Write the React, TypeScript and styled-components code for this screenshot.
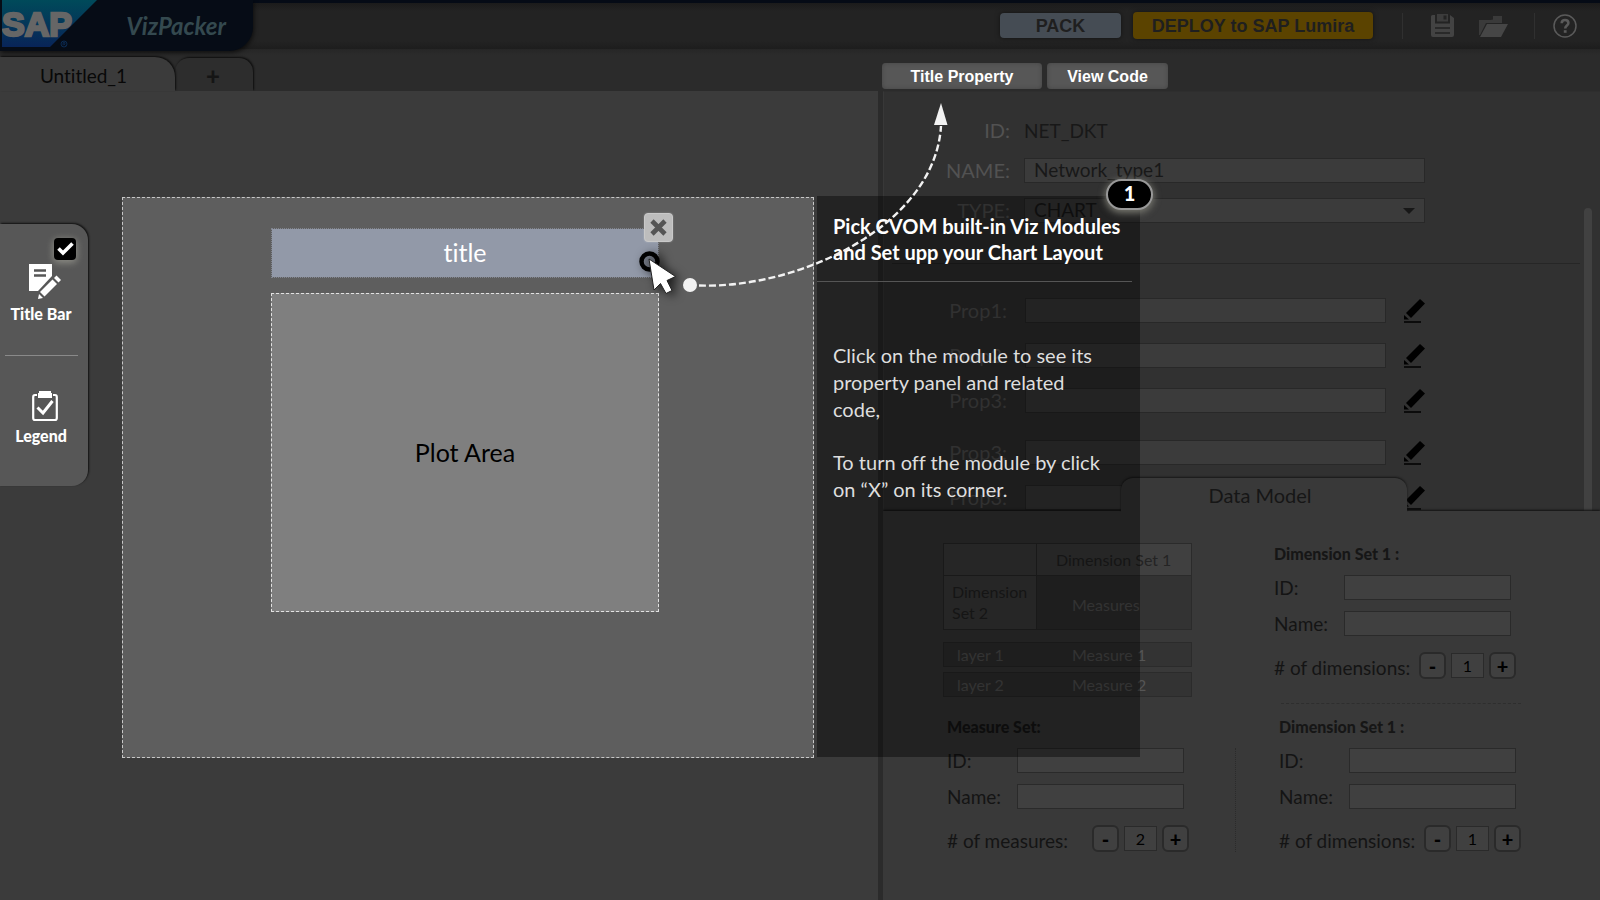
import React from "react";
import styled, { createGlobalStyle } from "styled-components";

const GlobalStyle = createGlobalStyle`
  *, *::before, *::after { box-sizing: border-box; }
  body {
    margin: 0;
    background: #3b3b3b;
    color: #141414;
    font-family: Lato, "Open Sans", sans-serif;
    font-size: 20px;
    font-variant-ligatures: none;
  }
  button, input, select { font: inherit; color: inherit; margin: 0; }
  h1, h2, h3, p, ul { margin: 0; padding: 0; }
`;

const INSPECTOR_WIDTH = "722px";

const Page = styled.div`
  display: flex;
  flex-direction: column;
  min-height: 100vh;
  overflow: hidden;
`;

/* ---------- header ---------- */

const Header = styled.header`
  display: flex;
  justify-content: space-between;
  height: 49px;
  border-top: 3px solid #050b16;
  background: linear-gradient(#1b1b1b, #232323 8px, #232323 38px, #1d1d1d);
`;

const Brand = styled.div`
  position: relative;
  z-index: 2;
  display: flex;
  align-items: center;
  justify-content: space-between;
  width: 253px;
  height: 51px;
  margin-top: -3px;
  padding-right: 27px;
  border-bottom-right-radius: 24px;
  background: #060c16;
  box-shadow: 1px 2px 4px rgba(0, 0, 0, 0.6);
`;

const LogoSvg = styled.svg`
  display: block;
  align-self: flex-start;
  margin-left: 2px;
`;

const ProductName = styled.h1`
  color: #34494f;
  font-size: 24px;
  font-style: italic;
  font-weight: 700;
  line-height: 26px;
`;

const HeaderActions = styled.div`
  display: flex;
  align-items: center;
  padding: 0 23px 1px 0;
`;

const ActionButton = styled.button<{ $tone: "pack" | "deploy" }>`
  width: ${(p) => (p.$tone === "pack" ? "121px" : "240px")};
  height: ${(p) => (p.$tone === "pack" ? "25px" : "27px")};
  margin-right: ${(p) => (p.$tone === "pack" ? "12px" : "29px")};
  padding: 0;
  border: 0;
  border-radius: 4px;
  background: ${(p) => (p.$tone === "pack" ? "#454c54" : "#5b4300")};
  box-shadow: 0 0 5px rgba(0, 0, 0, 0.5);
  color: #1f1f1f;
  font-family: "Liberation Sans", Arial, sans-serif;
  font-size: 18px;
  font-weight: 700;
  line-height: 24px;
`;

const IconButton = styled.button<{ $gap?: number }>`
  display: flex;
  padding: 0;
  border: 0;
  background: none;
  margin-left: ${(p) => p.$gap ?? 0}px;
`;

const HeaderRule = styled.span<{ $gap?: number }>`
  width: 1px;
  height: 26px;
  margin-left: ${(p) => p.$gap ?? 0}px;
  background: #303030;
`;

/* ---------- tab strip ---------- */

const TabStrip = styled.div`
  display: flex;
  height: 42px;
  background: linear-gradient(#262626, #2b2b2b 6px);
`;

const FileTabs = styled.nav`
  display: flex;
  flex: 1;
  align-items: flex-end;
  min-width: 0;
`;

const FileTab = styled.button`
  position: relative;
  width: 175px;
  height: 34px;
  padding: 4px 8px 0 0;
  border: 0;
  border-top-right-radius: 20px;
  background: #3b3b3b;
  box-shadow: 1px -1px 2px rgba(0, 0, 0, 0.7);
  color: #080808;
  font-size: 19px;
  line-height: 24px;
`;

const AddTab = styled.button`
  width: 78px;
  height: 33px;
  padding: 3px 2px 0 0;
  border: 0;
  border-radius: 14px 14px 0 0;
  background: #2d2d2d;
  box-shadow: 1px -1px 2px rgba(0, 0, 0, 0.7);
  color: #151515;
  font-size: 24px;
  font-weight: 900;
  line-height: 24px;
`;

const InspectorTabs = styled.div`
  display: flex;
  flex: 0 0 ${INSPECTOR_WIDTH};
  align-items: flex-end;
  gap: 5px;
  padding: 0 0 2px 4px;
`;

const InspectorTab = styled.button<{ $wide?: boolean }>`
  width: ${(p) => (p.$wide ? "160px" : "121px")};
  height: 26px;
  padding: 1px 0 0;
  border: 0;
  border-radius: 4px;
  background: #575757;
  box-shadow: inset 0 0 4px #444;
  color: #fff;
  font-family: "Liberation Sans", Arial, sans-serif;
  font-size: 16px;
  font-weight: 700;
  line-height: 25px;
`;

/* ---------- workspace ---------- */

const Workspace = styled.main`
  display: flex;
  flex: 1;
`;

const CanvasPane = styled.section`
  display: flex;
  flex: 1;
  align-items: stretch;
  min-width: 0;
  background: #3b3b3b;
`;

const Palette = styled.aside`
  position: relative;
  flex: none;
  align-self: flex-start;
  width: 88px;
  height: 262px;
  margin: 133px 34px 0 0;
  border-radius: 0 16px 16px 0;
  background: #575757;
  box-shadow: 1px -1px 2px #111;
`;

const PaletteItem = styled.button<{ $top: number }>`
  display: flex;
  flex-direction: column;
  align-items: center;
  gap: 4px;
  width: 82px;
  padding: ${(p) => p.$top}px 0 0;
  border: 0;
  background: none;
  color: #fff;
  font-size: 16px;
  font-weight: 900;
  line-height: 20px;

  svg { margin-left: 8px; }
`;

const PaletteRule = styled.hr`
  width: 73px;
  height: 1px;
  margin: 31px 0 0 5px;
  border: 0;
  background: #8a8a8a;
`;

const ModuleToggle = styled.label`
  position: absolute;
  top: 14px;
  right: 12px;
  width: 22px;
  height: 22px;
  border-radius: 4px;
  background: #000;
  box-shadow: 0 2px 7px 1px #8b8b84;

  input {
    position: absolute;
    inset: 0;
    width: 100%;
    height: 100%;
    opacity: 0;
  }
  svg { display: block; }
`;

const Artboard = styled.div`
  position: relative;
  display: flex;
  flex: 1;
  flex-direction: column;
  gap: 15px;
  min-width: 0;
  min-height: 561px;
  margin: 106px 64px 142px 0;
  padding: 30px 154px 0 148px;
  border: 1px dashed #c8c8c8;
  background: #5e5e5e;
`;

const TitleModule = styled.div`
  position: relative;
  height: 50px;
  border: 1px dotted #81858f;
  background: #9299a8;
  background-clip: padding-box;
  color: #fff;
  font-size: 25px;
  line-height: 46px;
  text-align: center;
`;

const PlotModule = styled.div`
  display: flex;
  align-items: center;
  justify-content: center;
  height: 319px;
  padding-bottom: 2px;
  border: 1px dashed #e2e2e2;
  background: #7f7f7f;
  color: #000;
  font-size: 25px;
  line-height: 28px;
`;

const RemoveButton = styled.button`
  position: absolute;
  top: -16px;
  right: -15px;
  display: flex;
  align-items: center;
  justify-content: center;
  width: 29px;
  height: 29px;
  padding: 0;
  border: 1px solid #c9c9c9;
  border-radius: 4px;
  background: #bdbdbd;
  box-shadow: 0 0 2px rgba(255, 255, 255, 0.3);
`;

const Pointer = styled.svg`
  position: absolute;
  top: 18px;
  right: -34px;
  z-index: 3;
  filter: drop-shadow(4px 2px 5px rgba(0, 0, 0, 0.7));
`;

/* ---------- coach mark ---------- */

const CoachMark = styled.aside`
  position: absolute;
  top: -2px;
  bottom: 0;
  left: calc(100% + 4px);
  z-index: 5;
  width: 323px;
  padding-top: 17px;
  background: rgba(0, 0, 0, 0.4);
`;

const CoachTitle = styled.h2`
  padding-left: 16px;
  color: #fff;
  font-size: 20px;
  font-weight: 700;
  line-height: 26px;
  white-space: nowrap;
`;

const CoachRule = styled.hr`
  height: 1px;
  margin: 16px 8px 60px 0;
  border: 0;
  background: #555;
`;

const CoachText = styled.p`
  padding: 0 28px 26px 16px;
  color: #dedede;
  font-size: 20px;
  line-height: 27px;
`;

const StepBadge = styled.span`
  position: absolute;
  top: -17px;
  right: -13px;
  width: 47px;
  height: 31px;
  border: 2px solid #989898;
  border-radius: 16px;
  background: #000;
  box-shadow: 0 2px 7px 1px #77776f;
  color: #fff;
  font-size: 20px;
  font-weight: 900;
  line-height: 25px;
  text-align: center;
`;

const Connector = styled.svg`
  position: absolute;
  top: -98px;
  left: calc(100% - 133px);
  z-index: 6;
  pointer-events: none;
`;

/* ---------- inspector ---------- */

const Inspector = styled.section`
  display: flex;
  flex: 0 0 ${INSPECTOR_WIDTH};
  flex-direction: column;
  border-left: 5px solid #2b2b2b;
`;

const PropertyPanel = styled.form`
  display: flex;
  justify-content: space-between;
  height: 420px;
  padding-right: 8px;
  overflow: hidden;
  border-top: 1px solid #2e2e2e;
  border-left: 1px solid #383838;
  background: #313131;
`;

const PropertyBody = styled.div`
  display: flex;
  flex: 1;
  flex-direction: column;
  padding: 26px 4px 0 0;
`;

const PropertyRows = styled.div<{ $gap: number }>`
  display: grid;
  row-gap: ${(p) => p.$gap}px;
`;

const PropertyRow = styled.div`
  display: grid;
  grid-template-columns: 126px 401px;
  column-gap: 14px;
  align-items: center;
  height: 25px;
  line-height: 25px;
`;

const PropertyLabel = styled.label<{ $inset?: boolean }>`
  padding-right: ${(p) => (p.$inset ? "3px" : "0")};
  color: #525252;
  text-align: right;
`;

const PropertyValue = styled.output`
  color: #181818;
  font-size: 19px;
`;

const fieldLook = `
  height: 25px;
  border: 1px solid #282828;
  border-radius: 0;
  background: #3b3b3b;
  outline: 0;
`;

const PropertyInput = styled.input`
  ${fieldLook}
  flex: 1;
  width: 100%;
  min-width: 0;
  padding: 0 9px 2px;
  color: #181818;
  font-size: 19px;
`;

const SelectWrap = styled.div`
  position: relative;

  svg {
    position: absolute;
    top: 10px;
    right: 10px;
  }
`;

const PropertySelect = styled.select`
  ${fieldLook}
  display: block;
  width: 100%;
  padding: 0 9px 2px;
  appearance: none;
  color: #181818;
  font-size: 19px;
  line-height: 22px;
`;

const PropertyRule = styled.hr`
  height: 1px;
  margin: 40px 0 34px 8px;
  border: 0;
  background: #262626;
`;

const EditableField = styled.div`
  display: flex;
  align-items: center;
  gap: 18px;
  padding-left: 1px;
`;

const Scrollbar = styled.div`
  width: 8px;
  margin-top: 116px;
  border-radius: 4px 4px 0 0;
  background: #414141;
`;

/* ---------- data model ---------- */

const DataPanel = styled.section`
  position: relative;
  display: flex;
  flex: 1;
  padding: 32px 0 40px 60px;
  background: #393939;
  box-shadow: 0 -1px 2px #111;
  clip-path: inset(-40px 0 0 0);
`;

const DataTab = styled.h2`
  position: absolute;
  top: -33px;
  left: 238px;
  width: 286px;
  height: 34px;
  padding-right: 8px;
  border-radius: 12px 12px 0 0;
  background: #393939;
  box-shadow: 0 -1px 2px #161616;
  clip-path: inset(-4px -4px 0 -4px);
  color: #161616;
  font-size: 20px;
  font-weight: 400;
  line-height: 34px;
  text-align: center;
`;

const DataColumn = styled.div<{ $right?: boolean }>`
  display: flex;
  flex-direction: column;
  width: ${(p) => (p.$right ? "auto" : "331px")};
  padding-top: ${(p) => (p.$right ? "2px" : "0")};
`;

const Matrix = styled.table`
  width: 249px;
  border-collapse: collapse;
  table-layout: fixed;
  color: #242424;
  font-size: 16px;
  line-height: 21px;

  th, td {
    height: 54px;
    padding: 0 8px 1px;
    border: 1px solid #2b2b2b;
    background: #404040;
    font-weight: 400;
    text-align: left;
  }
  col:first-child { width: 93px; }
  thead th, thead td { height: 32px; }
  thead th { padding-left: 19px; }
  tbody td {
    padding: 4px 0 0 35px;
    background: #333;
    color: #555;
  }
`;

const Layers = styled.ul`
  display: grid;
  row-gap: 5px;
  width: 249px;
  margin: 12px 0 21px;
  list-style: none;
`;

const Layer = styled.li`
  display: grid;
  grid-template-columns: 115px 1fr;
  height: 25px;
  padding-left: 13px;
  border: 1px solid #2b2b2b;
  background: #333;
  color: #555;
  font-size: 16px;
  line-height: 24px;
`;

const GroupSlot = styled.div<{ $indent: number }>`
  display: flex;
  align-items: flex-end;
  padding-left: ${(p) => p.$indent}px;
`;

const ColumnRule = styled.span`
  height: 104px;
  margin-left: 46px;
  border-left: 1px dotted #2b2b2b;
`;

const RowRule = styled.hr`
  width: 240px;
  margin: 24px 0 14px 7px;
  border: 0;
  border-top: 1px dashed #2e2e2e;
`;

const Group = styled.fieldset`
  width: 242px;
  min-width: 0;
  margin: 0;
  padding: 0;
  border: 0;
`;

const GroupTitle = styled.legend`
  display: block;
  height: 20px;
  margin-bottom: 10px;
  padding: 0;
  color: #161616;
  font-size: 16px;
  font-weight: 900;
  line-height: 18px;
`;

const GroupRow = styled.div`
  display: grid;
  grid-template-columns: 70px 167px;
  align-items: center;
  height: 25px;
  margin-bottom: 11px;
  font-size: 19px;
  line-height: 24px;
`;

const GroupInput = styled.input`
  width: 100%;
  min-width: 0;
  height: 25px;
  padding: 0 6px;
  border: 1px solid #2a2a2a;
  background: #404040;
  outline: 0;
`;

const CountRow = styled.div`
  display: flex;
  align-items: center;
  justify-content: space-between;
  height: 27px;
  margin-top: 16px;
  font-size: 19px;
  line-height: 24px;
  white-space: nowrap;

  > label { padding-top: 5px; }
`;

const Stepper = styled.div`
  display: flex;
  align-items: center;
  gap: 5px;
`;

const StepButton = styled.button`
  width: 27px;
  height: 27px;
  padding: 0;
  border: 2px solid #2a2a2a;
  border-radius: 6px;
  background: #404040;
  color: #000;
  font-size: 20px;
  font-weight: 900;
  line-height: 20px;
`;

const StepValue = styled.input`
  width: 33px;
  height: 25px;
  padding: 0;
  border: 1px solid #2a2a2a;
  background: #404040;
  color: #000;
  font-size: 16px;
  text-align: center;
  outline: 0;
`;

/* ---------- icons ---------- */

const SapLogo = () => (
  <LogoSvg width="96" height="48" viewBox="0 0 96 48" role="img" aria-label="SAP">
    <defs>
      <linearGradient id="sap" x1="0" y1="0" x2="0" y2="1">
        <stop offset="0" stopColor="#004a5a" />
        <stop offset="1" stopColor="#082458" />
      </linearGradient>
    </defs>
    <path d="M0 0H95L48 47H0Z" fill="url(#sap)" />
    <text x="0" y="36" fill="#666" stroke="#666" strokeWidth="2.5" fontFamily="Liberation Sans, Arial, sans-serif" fontWeight="700" fontSize="34">SAP</text>
    <circle cx="62" cy="44" r="3" fill="none" stroke="#0b2a50" />
    <path d="M61 45.500V42.500H63V44H61M62 44L63.500 45.500" fill="none" stroke="#0b2a50" strokeWidth="0.800" />
  </LogoSvg>
);

const SaveIcon = () => (
  <svg width="23" height="23" viewBox="0 0 23 23">
    <path d="M1.500 1H4V9.500H19V1L23 4V21a2 2 0 0 1-2 2H2a2 2 0 0 1-2-2V2.500a1.500 1.500 0 0 1 1.500-1.500Z" fill="#434343" />
    <path d="M6 0H17V7.500H6ZM12.500 1.500V5.500H15.500V1.500Z" fill="#3c3c3c" fillRule="evenodd" />
    <path d="M4 13H19V15H4ZM4 18H19V20H4Z" fill="#292929" />
  </svg>
);

const FolderIcon = () => (
  <svg width="29" height="22" viewBox="0 0 29 22">
    <path d="M0 5H11.500L14 4.500V1H23V8H7L1 20H0Z" fill="#3a3a3a" />
    <path d="M8 9H29L22 22H1Z" fill="#464646" />
  </svg>
);

const HelpIcon = () => (
  <svg width="24" height="24" viewBox="0 0 24 24" fill="none" stroke="#5a5a5a">
    <circle cx="12" cy="12" r="11" strokeWidth="1.500" />
    <path d="M8.700 9.200C8.700 7 10 6 12 6s3.400 1.200 3.400 3c0 2.400-3.200 2.600-3.200 5.400" strokeWidth="2.600" />
    <path d="M12.200 16.200V18.800" strokeWidth="2.800" />
  </svg>
);

const NoteIcon = () => (
  <svg width="33" height="36" viewBox="0 0 33 36">
    <path d="M0 0H23V12L9 27H0Z" fill="#fff" />
    <path d="M5 6.500H17M5 11.500H17" stroke="#575757" strokeWidth="2.500" />
    <path d="M11 28L23.500 15.500L28 20L15.500 32.500Z" fill="#fff" />
    <path d="M25 14L27.500 11.500L32 16L29.500 18.500Z" fill="#fff" />
    <path d="M10 30L14 34L9 35Z" fill="#fff" />
  </svg>
);

const ClipboardIcon = () => (
  <svg width="26" height="31" viewBox="0 0 26 31" fill="none" stroke="#fff">
    <path d="M5 4H3Q1.200 4 1.200 6V27Q1.200 29 3 29H23Q24.800 29 24.800 27V6Q24.800 4 23 4H21" strokeWidth="2.200" />
    <path d="M7 0H19V2H20V7H6V2H7Z" fill="#fff" stroke="none" />
    <path d="M5.500 16.500L11 22L20.500 10" strokeWidth="3" />
  </svg>
);

const TickIcon = () => (
  <svg width="22" height="22" viewBox="0 0 22 22">
    <path d="M4.500 10.500L9 15L18.500 5.500" fill="none" stroke="#fff" strokeWidth="3.600" />
  </svg>
);

const CrossIcon = () => (
  <svg width="17" height="17" viewBox="0 0 17 17">
    <path d="M2 2L15 15M15 2L2 15" stroke="#555" strokeWidth="4.600" />
  </svg>
);

const PencilIcon = () => (
  <svg width="21" height="24" viewBox="0 0 21 24">
    <path d="M2 14L16 0L21 4.500L7 19Z" fill="#000" />
    <path d="M0 16L5 20.500H0Z" fill="#000" />
    <path d="M0 23H17" stroke="#000" strokeWidth="1.500" />
  </svg>
);

/* ---------- pieces ---------- */

const EditableProperty = ({ id, label }: { id: string; label: string }) => (
  <PropertyRow>
    <PropertyLabel $inset htmlFor={id}>{label}</PropertyLabel>
    <EditableField>
      <PropertyInput id={id} />
      <IconButton type="button" aria-label={`Edit ${label}`}>
        <PencilIcon />
      </IconButton>
    </EditableField>
  </PropertyRow>
);

interface SetGroupProps {
  id: string;
  title: string;
  countLabel: string;
  count: number;
}

const SetGroup = ({ id, title, countLabel, count }: SetGroupProps) => (
  <Group>
    <GroupTitle>{title}</GroupTitle>
    <GroupRow>
      <label htmlFor={`${id}-id`}>ID:</label>
      <GroupInput id={`${id}-id`} />
    </GroupRow>
    <GroupRow>
      <label htmlFor={`${id}-name`}>Name:</label>
      <GroupInput id={`${id}-name`} />
    </GroupRow>
    <CountRow>
      <label htmlFor={`${id}-count`}>{countLabel}</label>
      <Stepper>
        <StepButton type="button">-</StepButton>
        <StepValue id={`${id}-count`} defaultValue={count} />
        <StepButton type="button">+</StepButton>
      </Stepper>
    </CountRow>
  </Group>
);

export default function App() {
  return (
    <Page>
      <GlobalStyle />
      <Header>
        <Brand>
          <SapLogo />
          <ProductName>VizPacker</ProductName>
        </Brand>
        <HeaderActions>
          <ActionButton $tone="pack">PACK</ActionButton>
          <ActionButton $tone="deploy">DEPLOY to SAP Lumira</ActionButton>
          <HeaderRule />
          <IconButton $gap={28} aria-label="Save"><SaveIcon /></IconButton>
          <IconButton $gap={25} aria-label="Open"><FolderIcon /></IconButton>
          <HeaderRule $gap={26} />
          <IconButton $gap={18} aria-label="Help"><HelpIcon /></IconButton>
        </HeaderActions>
      </Header>

      <TabStrip>
        <FileTabs>
          <FileTab>Untitled_1</FileTab>
          <AddTab aria-label="New tab">+</AddTab>
        </FileTabs>
        <InspectorTabs>
          <InspectorTab $wide>Title Property</InspectorTab>
          <InspectorTab>View Code</InspectorTab>
        </InspectorTabs>
      </TabStrip>

      <Workspace>
        <CanvasPane>
          <Palette>
            <PaletteItem $top={40}>
              <NoteIcon />
              Title Bar
            </PaletteItem>
            <ModuleToggle>
              <input type="checkbox" defaultChecked aria-label="Show title bar" />
              <TickIcon />
            </ModuleToggle>
            <PaletteRule />
            <PaletteItem $top={35}>
              <ClipboardIcon />
              Legend
            </PaletteItem>
          </Palette>

          <Artboard>
            <TitleModule>
              title
              <RemoveButton aria-label="Remove title"><CrossIcon /></RemoveButton>
              <Pointer width="54" height="54" viewBox="0 0 54 54">
                <circle cx="11.500" cy="14.500" r="8" fill="none" stroke="#000" strokeWidth="4.500" />
                <path d="M11 12L16 43L22.500 36.500L28 46.500L34 43.500L29 33.500L37.500 29.500Z" fill="#fff" stroke="#222" strokeWidth="1" />
              </Pointer>
            </TitleModule>
            <PlotModule>Plot Area</PlotModule>

            <CoachMark>
              <StepBadge>1</StepBadge>
              <CoachTitle>
                Pick CVOM built-in Viz Modules
                <br />
                and Set upp your Chart Layout
              </CoachTitle>
              <CoachRule />
              <CoachText>Click on the module to see its property panel and related code,</CoachText>
              <CoachText>To turn off the module by click on “X” on its corner.</CoachText>
            </CoachMark>

            <Connector width="270" height="200" viewBox="680 100 270 200">
              <circle cx="690" cy="285" r="7" fill="#f2f2f2" />
              <path d="M699 285.500C800 289 935 225 941 126" fill="none" stroke="#f2f2f2" strokeWidth="2.400" strokeDasharray="7 3" />
              <path d="M941 103L947.500 125H934Z" fill="#f2f2f2" />
            </Connector>
          </Artboard>
        </CanvasPane>

        <Inspector>
          <PropertyPanel>
            <PropertyBody>
              <PropertyRows $gap={15}>
                <PropertyRow>
                  <PropertyLabel htmlFor="chart-id">ID:</PropertyLabel>
                  <PropertyValue id="chart-id">NET_DKT</PropertyValue>
                </PropertyRow>
                <PropertyRow>
                  <PropertyLabel htmlFor="chart-name">NAME:</PropertyLabel>
                  <PropertyInput id="chart-name" defaultValue="Network_type1" />
                </PropertyRow>
                <PropertyRow>
                  <PropertyLabel htmlFor="chart-type">TYPE:</PropertyLabel>
                  <SelectWrap>
                    <PropertySelect id="chart-type">
                      <option>CHART</option>
                    </PropertySelect>
                    <svg width="12" height="6" viewBox="0 0 12 6">
                      <path d="M0 0H12L6 6Z" fill="#171717" />
                    </svg>
                  </SelectWrap>
                </PropertyRow>
              </PropertyRows>
              <PropertyRule />
              <PropertyRows $gap={27}>
                <PropertyRows $gap={20}>
                  <EditableProperty id="prop-1" label="Prop1:" />
                  <EditableProperty id="prop-2" label="Prop2:" />
                  <EditableProperty id="prop-3" label="Prop3:" />
                </PropertyRows>
                <PropertyRows $gap={20}>
                  <EditableProperty id="prop-4" label="Prop3:" />
                  <EditableProperty id="prop-5" label="Prop3:" />
                </PropertyRows>
              </PropertyRows>
            </PropertyBody>
            <Scrollbar />
          </PropertyPanel>

          <DataPanel>
            <DataTab>Data Model</DataTab>
            <DataColumn>
              <Matrix>
                <colgroup><col /><col /></colgroup>
                <thead>
                  <tr><td /><th scope="col">Dimension Set 1</th></tr>
                </thead>
                <tbody>
                  <tr><th scope="row">Dimension Set 2</th><td>Measures</td></tr>
                </tbody>
              </Matrix>
              <Layers>
                <Layer><span>layer 1</span><span>Measure 1</span></Layer>
                <Layer><span>layer 2</span><span>Measure 2</span></Layer>
              </Layers>
              <GroupSlot $indent={4}>
                <SetGroup id="measure" title="Measure Set:" countLabel="# of measures:" count={2} />
                <ColumnRule />
              </GroupSlot>
            </DataColumn>
            <DataColumn $right>
              <GroupSlot $indent={0}>
                <SetGroup id="dim-a" title="Dimension Set 1 :" countLabel="# of dimensions:" count={1} />
              </GroupSlot>
              <RowRule />
              <GroupSlot $indent={5}>
                <SetGroup id="dim-b" title="Dimension Set 1 :" countLabel="# of dimensions:" count={1} />
              </GroupSlot>
            </DataColumn>
          </DataPanel>
        </Inspector>
      </Workspace>
    </Page>
  );
}
